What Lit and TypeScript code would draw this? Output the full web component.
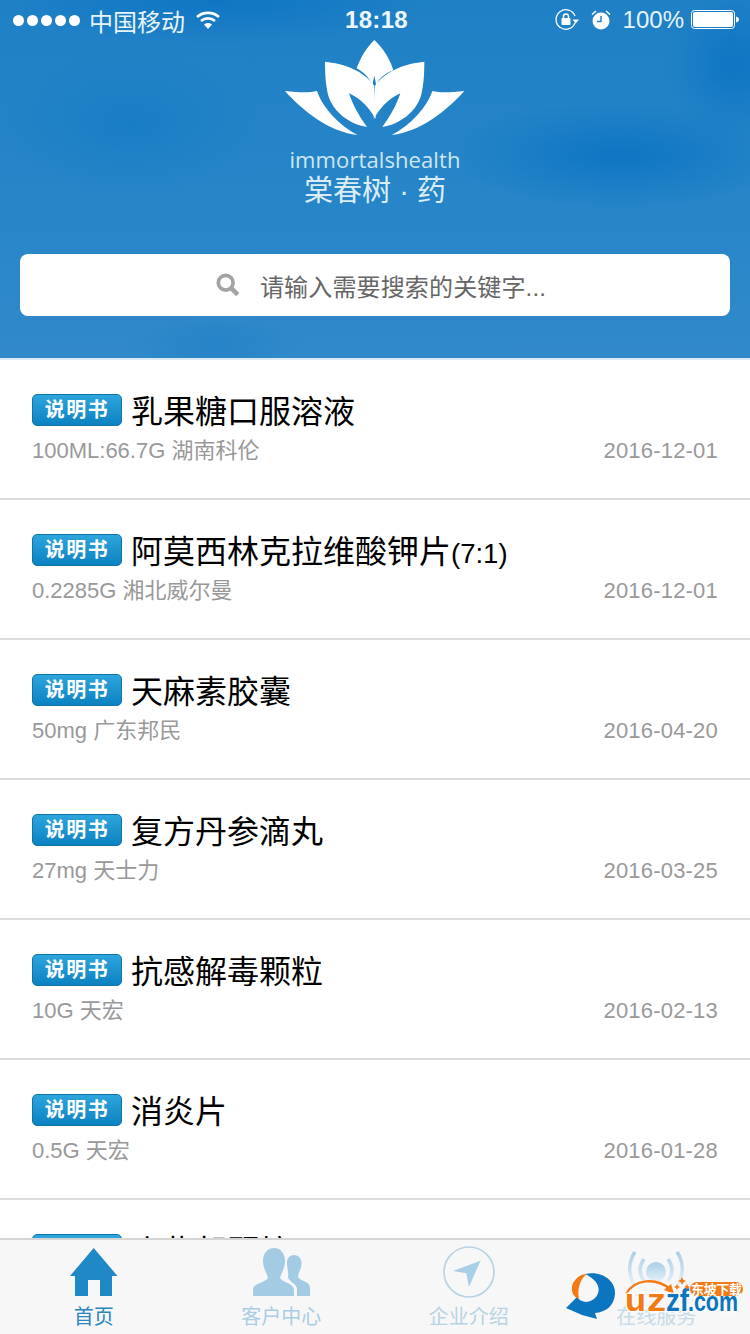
import { LitElement, html, css, svg } from "lit";
import { customElement } from "lit/decorators.js";

const rows = [
  { t: "乳果糖口服溶液", u: "", s: "100ML:66.7G 湖南科伦", d: "2016-12-01" },
  { t: "阿莫西林克拉维酸钾片", u: "(7:1)", s: "0.2285G 湘北威尔曼", d: "2016-12-01" },
  { t: "天麻素胶囊", u: "", s: "50mg 广东邦民", d: "2016-04-20" },
  { t: "复方丹参滴丸", u: "", s: "27mg 天士力", d: "2016-03-25" },
  { t: "抗感解毒颗粒", u: "", s: "10G 天宏", d: "2016-02-13" },
  { t: "消炎片", u: "", s: "0.5G 天宏", d: "2016-01-28" },
  { t: "小柴胡颗粒", u: "", s: "", d: "" },
];

const petals = svg`
  <path d="M150 80C205 85 265 106 298 152L302 252C285 222 258 190 222 175C234 212 254 246 276 276C222 266 176 232 160 182C151 145 150 112 150 80Z"/>
  <path d="M30 168C70 172 102 174 126 168C142 216 190 270 248 300C160 290 82 226 30 168Z"/>`;

@customElement("app-root")
export class AppRoot extends LitElement {
  static styles = css`
    :host {
      display: flex;
      flex-direction: column;
      width: 750px;
      height: 1334px;
      overflow: hidden;
      position: relative;
      background: #fff;
      font-family: "Liberation Sans", "Noto Sans CJK SC", sans-serif;
    }
    .header {
      height: 358px;
      flex: none;
      display: flex;
      flex-direction: column;
      color: #fff;
      background:
        radial-gradient(ellipse 170px 55px at 620px 155px, rgba(8,114,195,.8), rgba(8,114,195,0) 100%),
        radial-gradient(ellipse 70px 75px at 735px 65px, rgba(5,112,195,.7), rgba(5,112,195,0) 100%),
        radial-gradient(ellipse 130px 70px at 130px 125px, rgba(12,118,195,.45), rgba(12,118,195,0) 100%),
        radial-gradient(ellipse 220px 45px at 220px 0px, rgba(8,114,195,.7), rgba(8,114,195,0) 100%),
        radial-gradient(ellipse 90px 30px at 215px 345px, rgba(12,118,195,.3), rgba(12,118,195,0) 100%),
        linear-gradient(180deg, #1f80c5 0, #2886c8 220px, #3189c9 358px);
      border-bottom: 2px solid #dbe9f3;
      box-sizing: content-box;
    }
    .status {
      height: 40px;
      flex: none;
      display: grid;
      grid-template-columns: 1fr auto 1fr;
      align-items: center;
      padding: 0 11px 0 13px;
      font-size: 24px;
      color: #e8f4fb;
    }
    .left, .right { display: flex; align-items: center; }
    .right { justify-content: flex-end; }
    .dots { display: flex; gap: 3px; margin-right: 9px; }
    .dots i { width: 11px; height: 11px; border-radius: 50%; background: #fff; }
    .wifi { margin-left: 10px; }
    .time { font-weight: 700; font-size: 24px; color: #eef7fc; letter-spacing: .3px; padding-left: 1px; }
    .rot { margin-right: 12px; }
    .alarm { margin-right: 12px; }
    .batt { margin-left: 7px; }
    .brand {
      display: flex;
      flex-direction: column;
      align-items: center;
      height: 214px;
      box-sizing: border-box;
    }
    .lotus { width: 200px; height: 100px; fill: #fff; display: block; }
    .en {
      font-family: "Open Sans", "Noto Sans", sans-serif;
      font-size: 22px;
      line-height: 26px;
      margin-top: 6px;
      color: #cfe6f5;
      letter-spacing: .1px;
    }
    .cn {
      font-family: "Liberation Sans", "Noto Sans CJK SC", sans-serif;
      font-size: 29px;
      line-height: 32px;
      margin-top: 3px;
      color: #dcedf8;
    }
    .search {
      margin: 0 20px;
      height: 62px;
      flex: none;
      border-radius: 8px;
      background: #fff;
      display: flex;
      align-items: center;
      justify-content: center;
      gap: 20px;
      padding-left: 12px;
      color: #666;
      font-size: 24px;
    }
    .search svg { flex: none; }
    .search span { letter-spacing: .15px; }
    .list { flex: 1; min-height: 0; overflow: hidden; }
    .row {
      height: 140px;
      box-sizing: border-box;
      border-bottom: 2px solid #dcdcdc;
      padding: 34px 32px 0;
    }
    .top { display: flex; align-items: center; height: 34px; }
    .tag {
      width: 90px;
      height: 32px;
      flex: none;
      align-self: flex-start;
      box-sizing: border-box;
      border: 1px solid #0f74a8;
      border-radius: 5px;
      background: linear-gradient(180deg, #2ea5dc 0, #0c82c2 100%);
      color: #fff;
      font-size: 20px;
      line-height: 1;
      font-weight: 700;
      letter-spacing: 1.5px;
      display: flex;
      align-items: center;
      justify-content: center;
      padding-bottom: 1px;
      margin-right: 9px;
    }
    .title { font-size: 32px; color: #000; line-height: 34px; white-space: nowrap; margin-top: 4px; }
    .title small { font-size: 27.5px; }
    .bottom {
      display: flex;
      justify-content: space-between;
      margin-top: 9px;
      color: #999;
      font-size: 22px;
      line-height: 28px;
    }
    .date { letter-spacing: .2px; }
    .tabs {
      height: 96px;
      flex: none;
      box-sizing: border-box;
      border-top: 2px solid #d5d5d5;
      background: #f7f7f7;
      display: grid;
      grid-template-columns: repeat(4, 187.5px);
      position: relative;
      z-index: 1;
    }
    .tab {
      display: flex;
      flex-direction: column;
      align-items: center;
      font-size: 20px;
      line-height: 26px;
      color: #a9cde4;
    }
    .tab svg { display: block; margin: 8px 0; }
    .tab.on { color: #2a86bb; }
    .tab.pale { color: #b8d3e3; }
    .tab.paler { color: #c6dbe7; }
    .tab svg.big { margin: 6px 0; }
    .mark {
      position: absolute;
      left: 560px;
      top: 1265px;
      width: 190px;
      height: 60px;
      z-index: 2;
      overflow: visible;
    }
    .mark text {
      font-family: "Liberation Sans", "Noto Sans CJK SC", sans-serif;
      font-weight: 700;
    }
    .halo { paint-order: stroke; stroke: rgba(255,255,255,.75); stroke-width: 3px; }
  `;

  render() {
    return html`
      <div class="header">
        <div class="status">
          <div class="left">
            <div class="dots"><i></i><i></i><i></i><i></i><i></i></div>
            <span>中国移动</span>
            <svg class="wifi" width="26" height="20" viewBox="0 0 26 20" fill="none" stroke="#fff" stroke-width="2.6">
              <path d="M2 7C8 1.500 18 1.500 24 7"/>
              <path d="M6 11C10 7.500 16 7.500 20 11"/>
              <path d="M13 19L9 14.500C11 12.500 15 12.500 17 14.500Z" fill="#fff" stroke="none"/>
            </svg>
          </div>
          <div class="time">18:18</div>
          <div class="right">
            <svg class="rot" width="24" height="22" viewBox="0 0 24 22" fill="none" stroke="#fff" stroke-width="1.300">
              <path d="M20 14A9.800 9.800 0 1 1 20 7"/>
              <path d="M17.500 10.500H24L20.700 14.500Z" fill="#fff" stroke="none"/>
              <rect x="6.500" y="9" width="9" height="7" rx="1" fill="#fff" stroke="none"/>
              <path d="M8.500 9V7.500A2.500 2.500 0 0 1 13.500 7.500V9" stroke-width="1.500"/>
            </svg>
            <svg class="alarm" width="20" height="20" viewBox="0 0 20 20">
              <circle cx="10" cy="11" r="8.500" fill="#fff"/>
              <path d="M10 6V11.500H6" fill="none" stroke="#2785c7" stroke-width="1.500"/>
              <path d="M1 4.500L5 1M19 4.500L15 1" stroke="#fff" stroke-width="1.500"/>
            </svg>
            <span>100%</span>
            <svg class="batt" width="48" height="20" viewBox="0 0 48 20">
              <rect x=".5" y=".5" width="43" height="18" rx="3" fill="none" stroke="#fff"/>
              <rect x="2" y="2" width="40" height="15" rx="2" fill="#fff"/>
              <path d="M45 6.500C47 7 48 8 48 9.500S47 12 45 12.500Z" fill="#fff"/>
            </svg>
          </div>
        </div>
        <div class="brand">
          <svg class="lotus" viewBox="0 15 600 300">
            <path d="M298 15C325 40 345 72 355 106C328 116 310 132 304 152C302 140 300 130 298 122C296 130 294 140 292 152C286 132 270 114 245 100C255 72 272 40 298 15Z"/>
            ${petals}
            <g transform="translate(598 0) scale(-1 1)">${petals}</g>
          </svg>
          <div class="en">immortalshealth</div>
          <div class="cn">棠春树 · 药</div>
        </div>
        <div class="search">
          <svg width="24" height="24" viewBox="0 0 26 26" fill="none" stroke="#a3a3a3">
            <circle cx="10.500" cy="10.500" r="8" stroke-width="4"/>
            <path d="M16.500 16.500L23.500 23.500" stroke-width="5"/>
          </svg>
          <span>请输入需要搜索的关键字...</span>
        </div>
      </div>
      <div class="list">
        ${rows.map(
          (r) => html`<div class="row">
            <div class="top">
              <span class="tag">说明书</span>
              <span class="title">${r.t}<small>${r.u}</small></span>
            </div>
            <div class="bottom"><span>${r.s}</span><span class="date">${r.d}</span></div>
          </div>`
        )}
      </div>
      <div class="tabs">
        <div class="tab on">
          <svg width="48" height="48" viewBox="0 0 48 48" fill="#1f88c6">
            <path d="M23.700 0L47.500 28H42V48H30V32H18V48H5V28H0Z"/>
          </svg>
          首页
        </div>
        <div class="tab">
          <svg width="57" height="48" viewBox="0 0 57 48" fill="#a4cbe4">
            <path d="M21 0C28 0 32 6 32 13C32 20 28 26 27 30C30 35 41 35 41 42V48H0V42C0 35 12 35 15 30C14 26 10 20 10 13C10 6 14 0 21 0Z"/>
            <path d="M41 7C46 7 48.500 11 48.500 15C48.500 21 45.500 24 45 29C47 33 57 33 57 40V48H44V41C44 36 35 33 35 29C36 26 34 20 34 15C34 11 36 7 41 7Z"/>
          </svg>
          客户中心
        </div>
        <div class="tab pale">
          <svg class="big" width="52" height="52" viewBox="0 0 52 52">
            <circle cx="26" cy="26" r="25" fill="none" stroke="#b6d3e5" stroke-width="1.600"/>
            <path d="M37.500 14.700L10 25L23.300 27.300L26 40.700Z" fill="#a9cfe8"/>
          </svg>
          企业介绍
        </div>
        <div class="tab paler">
          <svg width="60" height="48" viewBox="0 0 60 48" fill="none" stroke-width="3.500">
            <defs>
              <linearGradient id="sg" x1="0" y1="0" x2="0" y2="1">
                <stop offset="0" stop-color="#a9d0e8"/><stop offset="1" stop-color="#e4f0f7"/>
              </linearGradient>
              <linearGradient id="sf" gradientUnits="userSpaceOnUse" x1="0" y1="4" x2="0" y2="38">
                <stop offset="0" stop-color="#a9cee6"/><stop offset="1" stop-color="#e8f1f6"/>
              </linearGradient>
            </defs>
            <path stroke="url(#sf)" d="M9 4C2 14 2 28 9 38M51 4C58 14 58 28 51 38"/>
            <path stroke="url(#sf)" d="M18 11C13 18 13 26 18 33M42 11C47 18 47 26 42 33"/>
            <circle cx="30" cy="24" r="10" fill="url(#sg)"/>
          </svg>
          在线服务
        </div>
      </div>
      <svg class="mark" viewBox="0 0 190 60">
        <path d="M25 9C42 5 56 16 55 29C54 41 46 47 35 48L37 54L22 50L6 43L17 32C22 39 31 38 36 32C41 26 40 16 25 9Z" fill="#0c75c0"/>
        <path d="M13 18C17 12 21 9 27 9C20 14 17 24 19 34C13 32 10 25 13 18Z" fill="#f47a14"/>
        <path d="M66 29C74 14 96 12 110 24" fill="none" stroke="#f47a14" stroke-width="2.500"/>
        <path d="M114 29L104 25L111 19Z" fill="#f47a14"/>
        <text class="halo" x="65" y="46" font-size="32" fill="#f47a14" stroke="#f47a14" textLength="21" lengthAdjust="spacingAndGlyphs">u</text>
        <text class="halo" x="87" y="46" font-size="32" fill="#f47a14" textLength="19" lengthAdjust="spacingAndGlyphs">z</text>
        <text class="halo" x="106" y="46" font-size="32" fill="#0c75c0" textLength="23" lengthAdjust="spacingAndGlyphs">zf</text>
        <text class="halo" x="128" y="46" font-size="27" fill="#0c75c0" textLength="50" lengthAdjust="spacingAndGlyphs">.com</text>
        <rect x="130" y="17" width="53" height="14" rx="7" fill="#f47a14"/>
        <text x="131" y="29" font-size="13" fill="#fff" textLength="51">东坡下载</text>
        <path d="M122 12l1.300 2.700 2.700 1.300-2.700 1.300-1.300 2.700-1.300-2.700-2.700-1.300 2.700-1.300ZM117 19l1 2 2 1-2 1-1 2-1-2-2-1 2-1ZM127 19l1 2 2 1-2 1-1 2-1-2-2-1 2-1Z" fill="#f47a14"/>
      </svg>
    `;
  }
}
